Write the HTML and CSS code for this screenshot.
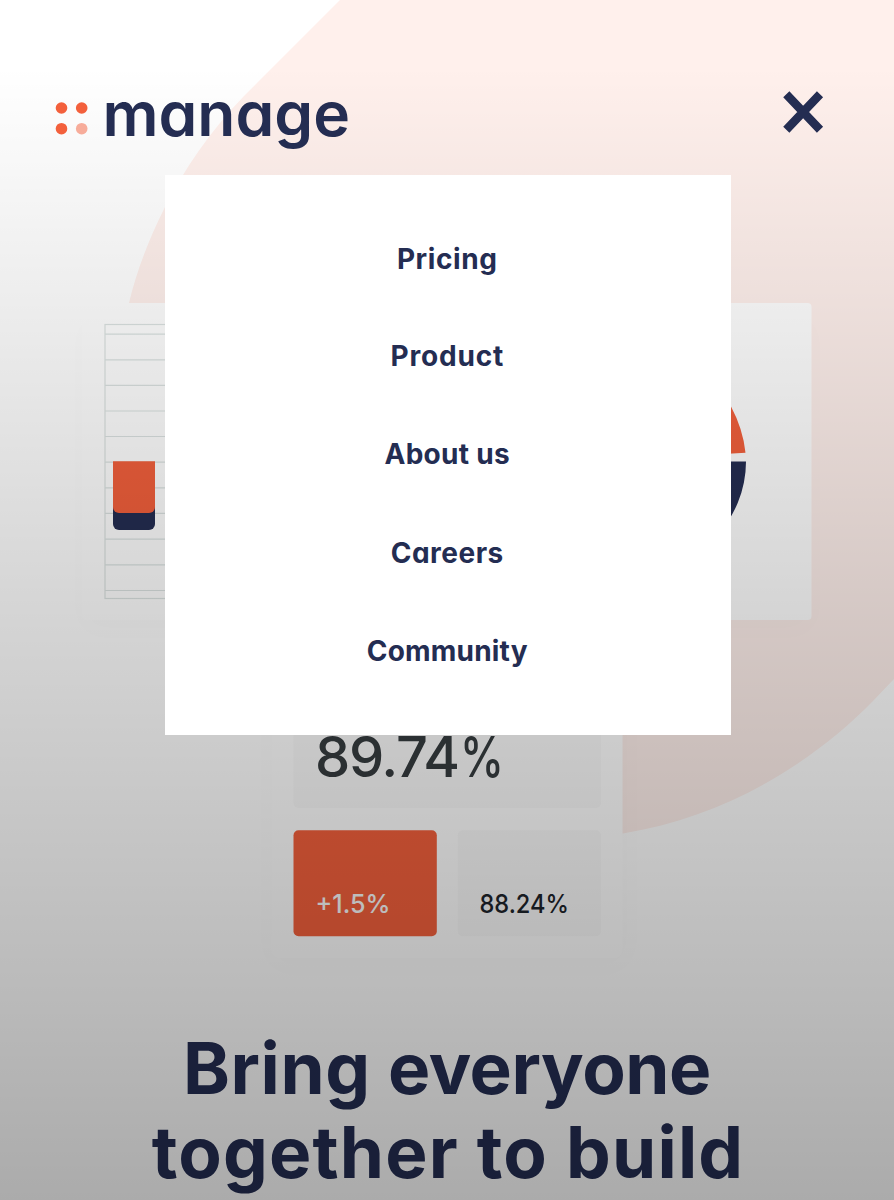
FILE: index.html
```html
<!DOCTYPE html>
<html lang="en">
<head>
<meta charset="utf-8">
<meta name="viewport" content="width=device-width, initial-scale=1">
<title>Manage</title>
<link rel="stylesheet" href="styles.css">
</head>
<body>
<div class="page">
  <svg class="backdrop" viewBox="0 0 894 1200" aria-hidden="true">
    <path d="M340 0 L244 96 C210 131 184 170 165 207 C148 241 136 273 129 303 C100 460 170 600 300 720 L540 842 Q582 842 623 833.500 C728 816 812 763 873 701 L894 679 V0 Z" fill="#fff0ec"/>
  </svg>
  <header class="header">
    <svg class="logo" viewBox="0 0 310 70" role="img" aria-label="manage">
      <circle cx="11.500" cy="28" r="5.800" fill="#f3603c"/>
      <circle cx="31.700" cy="28" r="5.800" fill="#f3603c"/>
      <circle cx="11.500" cy="48.700" r="5.800" fill="#f3603c"/>
      <circle cx="31.700" cy="48.700" r="5.800" fill="#f7ac9a"/>
      <text class="wordmark" x="52.500" y="56" textLength="247.500" lengthAdjust="spacingAndGlyphs">manage</text>
    </svg>
    <button class="close" aria-label="Close menu">
      <svg viewBox="0 0 42 44"><path d="M4.300 4.300 38 39.700M38 4.300 4.300 39.700" stroke="#242d52" stroke-width="8.500"/></svg>
    </button>
  </header>
  <main class="hero">
    <svg class="illustration" viewBox="0 174 894 846" aria-hidden="true">
      <defs>
        <filter id="soft" x="-10%" y="-10%" width="120%" height="120%"><feGaussianBlur stdDeviation="12"/></filter>
      </defs>
      <rect x="80" y="318" width="735" height="315" rx="18" fill="#242d52" opacity=".008" filter="url(#soft)"/>
      <rect x="82" y="303" width="729.500" height="317" rx="4" fill="#fff"/>
      <g fill="none" stroke="#dce3e2" stroke-width="1.200">
        <rect x="105" y="324.500" width="320" height="274"/>
        <path d="M105 334.200h320M105 359.800h320M105 385.400h320M105 411h320M105 436.500h320M105 462.200h320M105 487.900h320M105 513.400h320M105 539.200h320M105 564.900h320M105 590.500h320"/>
      </g>
      <path d="M113 462h42v62a6 6 0 0 1-6 6h-30a6 6 0 0 1-6-6z" fill="#242d52"/>
      <path d="M113 461.300h42V507a6 6 0 0 1-6 6h-30a6 6 0 0 1-6-6z" fill="#f3603c"/>
      <path d="M638 353Q706 353 731 406.500 743 429 745.500 452.700L690 456a52 52 0 0 0-52-50z" fill="#f3603c"/>
      <path d="M746 461.500a108 108 0 0 1-216 0h56a52 52 0 0 0 104 0z" fill="#242d52"/>
      <rect x="266" y="500" width="366" height="471" rx="24" fill="#242d52" opacity=".008" filter="url(#soft)"/>
      <rect x="271.500" y="430" width="351" height="528" rx="8" fill="#fff"/>
      <rect x="293.500" y="650" width="307.500" height="158" rx="5" fill="#fafafa"/>
      <rect x="293.500" y="830.200" width="143.300" height="106" rx="5" fill="#f3603c"/>
      <rect x="457.700" y="830.200" width="143.300" height="106" rx="5" fill="#fafafa"/>
      <g class="figure">
        <text x="315" y="776.500" font-size="56" fill="#363c3f" textLength="145" lengthAdjust="spacing">89.74</text>
        <text x="460" y="776.500" font-size="56" fill="#363c3f" textLength="44" lengthAdjust="spacingAndGlyphs">%</text>
        <text x="315.500" y="913" font-size="26" fill="#fafafa" textLength="75" lengthAdjust="spacingAndGlyphs">+1.5%</text>
        <text x="479.500" y="913" font-size="26" fill="#1d242b" textLength="89.500" lengthAdjust="spacingAndGlyphs">88.24%</text>
      </g>
    </svg>
    <h1 class="title"><span class="line first">Bring <span class="wide">everyone</span></span><span class="line second">together to build</span></h1>
  </main>
  <div class="shade"></div>
  <nav class="menu">
    <a class="pricing" href="#">Pricing</a>
    <a class="product" href="#">Product</a>
    <a class="about" href="#">About us</a>
    <a class="careers" href="#">Careers</a>
    <a class="community" href="#">Community</a>
  </nav>
</div>
</body>
</html>
```
FILE: styles.css
```css
* { box-sizing: border-box; }
body { margin: 0; background: #fff; font-family: Inter, "Liberation Sans", sans-serif; font-feature-settings: "cv11"; color: #242d52; }
.page { position: relative; height: 1200px; overflow: hidden; }
.backdrop { position: absolute; inset: 0; width: 894px; height: 1200px; }
.header { position: relative; z-index: 2; height: 174px; padding: 80px 70px 0 50px; display: flex; justify-content: space-between; align-items: flex-start; }
.logo { width: 310px; height: 70px; overflow: visible; }
.wordmark { font-size: 61px; font-weight: 600; fill: #242d52; }
.close { width: 42px; height: 44px; margin-top: 10px; padding: 0; border: 0; background: none; }
.close svg { display: block; width: 42px; height: 44px; }
.hero { position: relative; }
.illustration { display: block; width: 894px; height: 846px; }
.figure { font-weight: 500; }
.title { margin: 6px 0 0; font-size: 71px; line-height: 84px; font-weight: 700; text-align: center; }
.line { display: block; white-space: nowrap; }
.first { letter-spacing: .6px; }
.wide { letter-spacing: -.4px; }
.second { letter-spacing: 1.200px; padding-left: 2px; }
.shade { position: absolute; z-index: 1; inset: 0; background: linear-gradient(rgba(0,0,0,0) 65px, rgba(0,0,0,.07) 300px, rgba(0,0,0,.17) 620px, rgba(0,0,0,.265) 980px, rgba(0,0,0,.33) 1200px); }
.menu { position: absolute; z-index: 3; left: 164.500px; top: 174.500px; width: 566.500px; height: 560px; padding: 60px 0 0; background: #fff; display: flex; flex-direction: column; align-items: center; gap: 50px; }
.menu a { font-size: 28px; line-height: 48px; font-weight: 700; color: #242d52; text-decoration: none; margin-left: -1px; }
.pricing { letter-spacing: .6px; }
.product { letter-spacing: .8px; margin-top: -1px; }
.about { letter-spacing: .3px; }
.careers { letter-spacing: .5px; margin-top: 1px; }
.community { letter-spacing: .2px; }
```
